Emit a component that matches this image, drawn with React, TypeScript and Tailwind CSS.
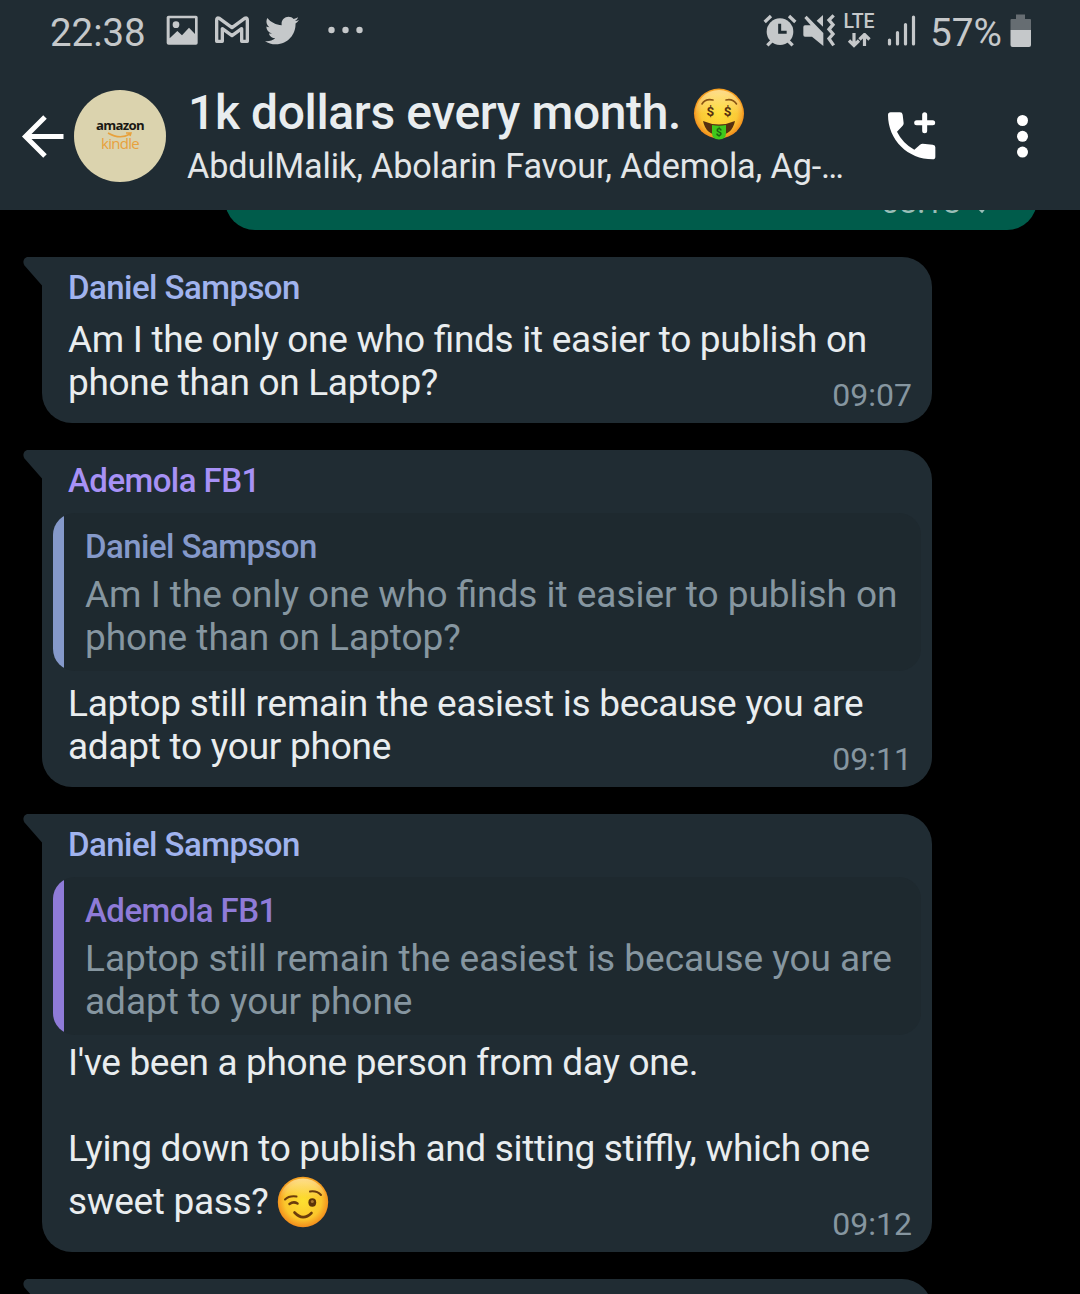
import type { ReactNode } from "react";
import { FaTwitter } from "react-icons/fa";

function StatusBar() {
  return (
    <div className="flex h-16 items-start justify-between pl-[50px] pr-[48px] text-[#c5c8ca]">
      <div className="flex items-start">
        <span className="mt-[9px] w-[116px] text-[38.4px] leading-[47px]">22:38</span>
        <svg className="mt-[15px] h-[31px] w-[33px]" viewBox="498 46 99 93" fill="currentColor">
          <path
            fillRule="evenodd"
            d="M506 48H588Q593 48 593 53V130Q593 135 588 135H506Q500 135 500 130V53Q500 48 506 48ZM509 56V116L532 94L546 107L567 84L585 103V56Z"
          />
          <circle cx="528" cy="75" r="10" />
        </svg>
        <svg className="ml-[14px] mt-[15px] h-[31px] w-[38px]" viewBox="639 46 114 93" fill="none" stroke="currentColor" strokeWidth="10" strokeLinejoin="round">
          <path d="M650 125V61Q650 52 658 56L696 84L734 56Q742 52 742 61V125H725V87L696 108L667 87V125Z" />
        </svg>
        <FaTwitter className="ml-[14px] mt-[13px] h-[35px] w-[34px]" />
        <svg className="ml-[28px] mt-[24px] h-[12px] w-[38px]" viewBox="0 0 38 12" fill="currentColor">
          <circle cx="4.5" cy="6" r="3.2" />
          <circle cx="18.5" cy="6" r="3.2" />
          <circle cx="32.5" cy="6" r="3.2" />
        </svg>
      </div>
      <div className="flex items-start">
        <svg className="mt-[13px] h-[35px] w-[34px]" viewBox="69 39 102 105">
          <g stroke="currentColor" strokeWidth="10" fill="none">
            <path d="M74 66L93 48M147 48L166 66M82 136L97 121M158 136L143 121" />
          </g>
          <circle cx="120" cy="95" r="40" fill="currentColor" />
          <path d="M119 71V97H140" fill="none" stroke="#202c33" strokeWidth="9" />
        </svg>
        <svg className="ml-[6px] mt-[13px] h-[35px] w-[33px]" viewBox="189 39 99 105" fill="currentColor">
          <path d="M200 47L250 99V138L216 110H195Q190 110 190 105V81Q190 76 195 76H212L193 54ZM249 45V80L230 62Z" />
          <path d="M281 46L267 60L279 74L267 88L279 102L267 116L281 136" fill="none" stroke="currentColor" strokeWidth="10" />
        </svg>
        <div className="ml-[7px] mt-[12px] flex w-[32px] flex-col items-center">
          <span className="text-[19.5px] font-medium leading-[20px]">LTE</span>
          <svg className="mt-[1px] h-[15px] w-[24px]" viewBox="0 0 24 15" fill="none" stroke="currentColor" strokeWidth="3.2">
            <path d="M7 0V12M2 7.5L7 12.5L12 7.5M17.5 13V2M12.5 6.5L17.5 1.5L22.5 6.5" />
          </svg>
        </div>
        <svg className="ml-[12px] mt-[15px] h-[32px] w-[30px]" viewBox="0 0 30 32" stroke="currentColor" strokeWidth="3.2" strokeLinecap="round">
          <path d="M2.5 25V29M10.5 17.5V29M18.5 9.5V29M26.5 2V29" />
        </svg>
        <span className="ml-[13px] mt-[9px] w-[80px] text-[38.8px] leading-[47px]">57%</span>
        <svg className="mt-[14px] h-[34px] w-[22px]" viewBox="0 0 22 34">
          <path d="M6 0.5H15V5H20Q21 5 21 6V16H0.500V6Q0.500 5 1.500 5H6Z" fill="#666d72" />
          <path d="M0.500 16H21V31Q21 33 19 33H2.500Q0.500 33 0.500 31Z" fill="currentColor" />
        </svg>
      </div>
    </div>
  );
}

function MoneyFace() {
  return (
    <svg className="mt-px h-[52px] w-[52px] shrink-0" viewBox="0 0 52 52">
      <defs>
        <radialGradient id="money" cx="50%" cy="48%" r="52%">
          <stop offset="0" stopColor="#fde030" />
          <stop offset="0.7" stopColor="#fbc62c" />
          <stop offset="1" stopColor="#f28c1c" />
        </radialGradient>
        <linearGradient id="moneyTop" x1="0" x2="0" y1="0" y2="1">
          <stop offset="0" stopColor="#ffe9a6" stopOpacity="0.8" />
          <stop offset="0.5" stopColor="#ffe9a6" stopOpacity="0.1" />
          <stop offset="1" stopColor="#ffe9a6" stopOpacity="0" />
        </linearGradient>
      </defs>
      <circle cx="26" cy="25.500" r="25" fill="url(#money)" />
      <circle cx="26" cy="25.500" r="23.500" fill="url(#moneyTop)" />
      <path d="M9 16Q12 10.500 20 12M33 12Q40 10.500 43.500 16" fill="none" stroke="#8a5514" strokeWidth="1.600" strokeLinecap="round" />
      <g fill="#543010" fontFamily="Roboto" fontWeight="700" fontSize="13.500" textAnchor="middle">
        <text x="17.300" y="27.500">$</text>
        <text x="34.700" y="27.500">$</text>
      </g>
      <path d="M10 33Q26 40 42 33Q39 47 26 47Q13 47 10 33Z" fill="#543010" />
      <path d="M19 37Q26 38.500 33 37V45Q33 51.500 26 51.500Q19 51.500 19 45Z" fill="#3fc81c" />
      <text x="26" y="48" fill="#1b6310" fontFamily="Roboto" fontWeight="700" fontSize="11" textAnchor="middle">$</text>
    </svg>
  );
}

function WinkFace() {
  return (
    <svg className="h-[52px] w-[52px] shrink-0" viewBox="0 0 52 52">
      <defs>
        <radialGradient id="wink" cx="50%" cy="48%" r="52%">
          <stop offset="0" stopColor="#fde030" />
          <stop offset="0.7" stopColor="#fbc62c" />
          <stop offset="1" stopColor="#f28c1c" />
        </radialGradient>
        <linearGradient id="winkTop" x1="0" x2="0" y1="0" y2="1">
          <stop offset="0" stopColor="#ffe9a6" stopOpacity="0.8" />
          <stop offset="0.4" stopColor="#ffe9a6" stopOpacity="0" />
        </linearGradient>
      </defs>
      <circle cx="26" cy="26" r="25.200" fill="url(#wink)" />
      <circle cx="26" cy="26" r="23.500" fill="url(#winkTop)" />
      <g fill="none" stroke="#6b3c0c" strokeLinecap="round">
        <path d="M8 23.500Q12 19.500 19.500 20.500" strokeWidth="2" />
        <path d="M33 15.500Q40 14.500 44 19" strokeWidth="2" />
        <path d="M12.500 28Q16.500 25 20.500 27.500" strokeWidth="2.500" />
        <path d="M17.500 36.500Q26 45.500 34.500 37" strokeWidth="2.600" />
      </g>
      <ellipse cx="35.300" cy="26.500" rx="3.900" ry="4.200" fill="#5c3409" />
      <circle cx="35.300" cy="25.500" r="1.500" fill="#a9772f" />
    </svg>
  );
}

function Header() {
  return (
    <div className="flex h-[146px] items-center pb-[2px] pl-[21px]">
      <svg className="h-[44px] w-[44px] shrink-0" viewBox="0 0 44 44" fill="none" stroke="#fff" strokeWidth="5">
        <path d="M42.500 22.500H5M24 3L4.500 22.500L24 42" />
      </svg>
      <div className="ml-[9px] flex h-[92px] w-[92px] shrink-0 flex-col items-center rounded-full bg-[#dbd3ae] font-['Open_Sans']">
        <span className="mt-[27px] text-[13.2px] font-bold leading-[16px] tracking-[-0.7px] text-[#1a1813]">amazon</span>
        <svg className="-mt-px h-[6px] w-[26px]" viewBox="0 0 26 6" fill="none" stroke="#e8a13c" strokeWidth="1.500">
          <path d="M1 1Q13 8 23 2M19 1H24L23 4" />
        </svg>
        <span className="-mt-[3px] text-[15px] leading-[17px] tracking-[-0.7px] text-[#e8a13c]">kindle</span>
      </div>
      <div className="ml-[22px] flex w-[679px] flex-col gap-1">
        <div className="flex h-[56px] items-center">
          <span className="whitespace-pre text-[48px] font-medium leading-[56px] tracking-[-0.38px] text-[#e9edef]">1k dollars every month. </span>
          <MoneyFace />
        </div>
        <span className="-ml-px whitespace-nowrap text-[34.2px] leading-[42px] tracking-[-0.12px] text-[#e3e6e8]">AbdulMalik, Abolarin Favour, Ademola, Ag-…</span>
      </div>
      <svg className="ml-[17px] h-[56px] w-[56px] shrink-0" viewBox="672 116 168 168" fill="#fff">
        <path d="M692 129H720Q727 129 728 136L731 162Q731 166 728 169L711 187Q728 222 763 241L780 226Q784 223 788 223L818 226Q826 227 826 234V262Q826 270 818 270C744 270 684 212 684 137Q684 129 692 129Z" />
        <path d="M794 136V184M770 160H818" stroke="#fff" strokeWidth="15" strokeLinecap="round" />
      </svg>
      <svg className="ml-[75px] h-[44px] w-[15px] shrink-0" viewBox="0 0 15 44" fill="#fff">
        <circle cx="7.500" cy="6.500" r="5.500" />
        <circle cx="7.500" cy="22.300" r="5.500" />
        <circle cx="7.500" cy="38.100" r="5.500" />
      </svg>
    </div>
  );
}

function Bubble({ children, time }: { children?: ReactNode; time?: string }) {
  return (
    <div className="relative ml-[42px] w-[890px] shrink-0 rounded-[30px] rounded-tl-none bg-[#202c33] px-[11px] pb-[19px] pt-[11px]">
      <svg className="absolute -left-[19px] top-0 h-[29px] w-5" viewBox="0 0 20 29" fill="#202c33">
        <path d="M20 0H5C1 0-1 5 1.500 8.500L19 28.500H20Z" />
      </svg>
      {children}
      {time && <span className="absolute bottom-[9px] right-[20px] text-[32px] leading-[38px] text-[#8696a0]">{time}</span>}
    </div>
  );
}

function Name({ text, color }: { text: string; color: string }) {
  return <div className={`text-[33px] font-medium leading-[39px] tracking-[-0.55px] ${color}`}>{text}</div>;
}

function Body({ lines, className = "" }: { lines: string[]; className?: string }) {
  return (
    <div className={`whitespace-nowrap text-[37px] leading-[43px] [font-feature-settings:'liga'_1] ${className}`}>
      {lines.map((line, i) => (
        <div key={i} className="h-[43px]">
          {line}
        </div>
      ))}
    </div>
  );
}

function Quote({ name, color, bar, lines }: { name: string; color: string; bar: string; lines: string[] }) {
  return (
    <div className="mt-[13px] flex h-[158px] overflow-hidden rounded-[22px] bg-[#1e292f]">
      <div className={`w-[11px] shrink-0 ${bar}`} />
      <div className="pl-[21px] pt-[14px]">
        <Name text={name} color={color} />
        <Body lines={lines} className="mt-[7px] tracking-[-0.03px] text-[#8696a0]" />
      </div>
    </div>
  );
}

export default function App() {
  return (
    <div className="h-[1294px] w-[1080px] overflow-hidden bg-black font-['Roboto',sans-serif]">
      <div className="h-[210px] bg-[#202c33]">
        <StatusBar />
        <Header />
      </div>
      <div className="flex h-[1084px] flex-col overflow-hidden">
        <div className="h-5 shrink-0 overflow-hidden">
          <div className="-mt-[40px] ml-[225px] flex h-[60px] w-[812px] justify-end rounded-b-[30px] bg-[#005c4b] pr-[43px] text-[#99beb7]">
            <span className="mt-[13px] text-[32px] leading-[38px]">08:18</span>
            <svg className="ml-[9px] mt-[19px] h-[24px] w-[24px]" viewBox="0 0 24 24" fill="none" stroke="currentColor" strokeWidth="3">
              <path d="M4 14L12 22L23 8" />
            </svg>
          </div>
        </div>
        <div className="mt-[27px] flex flex-col gap-[27px]">
          <Bubble time="09:07">
            <div className="pl-[15px]">
              <Name text="Daniel Sampson" color="text-[#a0b3ee]" />
              <Body
                className="mt-[11px] tracking-[-0.3px] text-[#e9edef]"
                lines={["Am I the only one who finds it easier to publish on", "phone than on Laptop?"]}
              />
            </div>
          </Bubble>
          <Bubble time="09:11">
            <div className="pl-[15px]">
              <Name text="Ademola FB1" color="text-[#a791f6]" />
            </div>
            <Quote
              name="Daniel Sampson"
              color="text-[#8599ca]"
              bar="bg-[#8599ca]"
              lines={["Am I the only one who finds it easier to publish on", "phone than on Laptop?"]}
            />
            <Body
              className="mt-[11px] pl-[15px] tracking-[-0.26px] text-[#e9edef]"
              lines={["Laptop still remain the easiest is because you are", "adapt to your phone"]}
            />
          </Bubble>
          <Bubble time="09:12">
            <div className="pl-[15px]">
              <Name text="Daniel Sampson" color="text-[#a0b3ee]" />
            </div>
            <Quote
              name="Ademola FB1"
              color="text-[#8f7bd8]"
              bar="bg-[#8f7bd8]"
              lines={["Laptop still remain the easiest is because you are", "adapt to your phone"]}
            />
            <Body
              className="mt-[6px] pl-[15px] tracking-[-0.32px] text-[#e9edef]"
              lines={["I've been a phone person from day one.", "", "Lying down to publish and sitting stiffly, which one"]}
            />
            <div className="flex h-[63px] items-center pl-[15px] text-[37px] leading-[62px] tracking-[-0.33px] text-[#e9edef]">
              <span className="whitespace-pre pt-px">sweet pass? </span>
              <WinkFace />
            </div>
          </Bubble>
          <Bubble>
            <div className="h-20" />
          </Bubble>
        </div>
      </div>
    </div>
  );
}
